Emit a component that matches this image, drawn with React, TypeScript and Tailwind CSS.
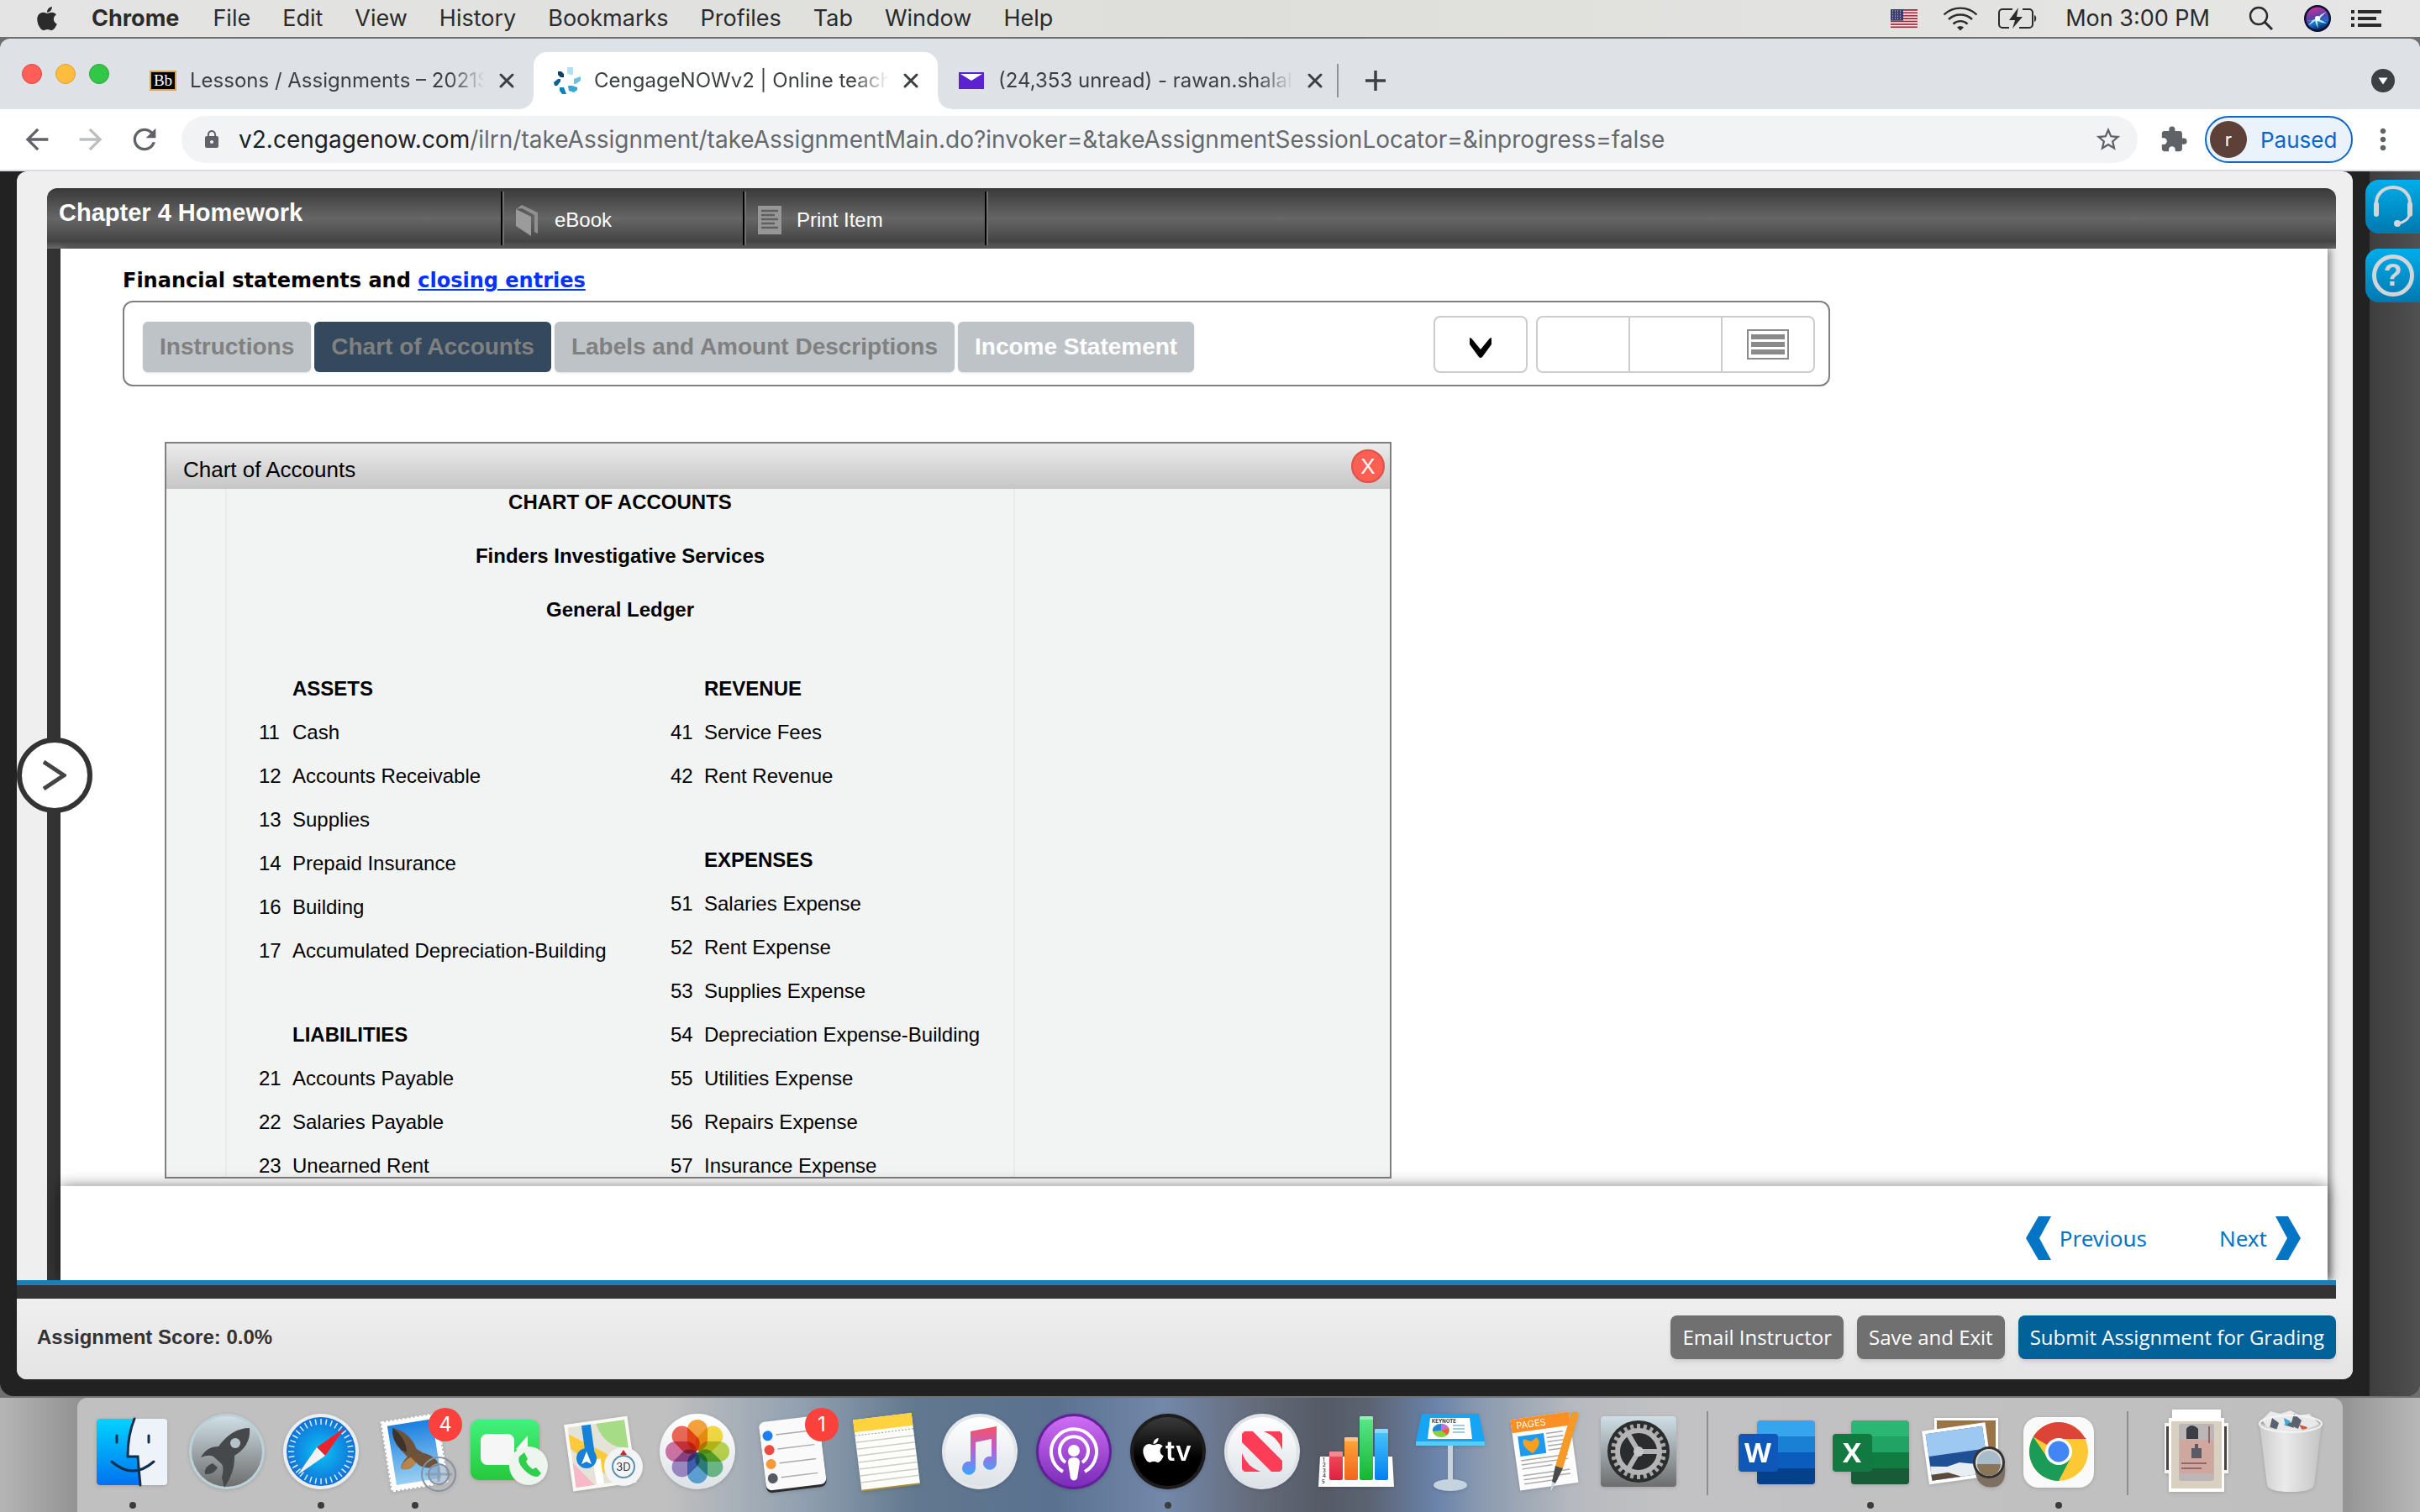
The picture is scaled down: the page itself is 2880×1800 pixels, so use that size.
import type { ReactNode } from "react";
import clsx from "clsx";
import { FaApple } from "react-icons/fa";
import {
  MdArrowBack,
  MdArrowForward,
  MdExtension,
  MdLock,
  MdMoreVert,
  MdRefresh,
  MdStarBorder,
} from "react-icons/md";

/* ============================================================
   MENU BAR
   ============================================================ */

const MENUS = ["File", "Edit", "View", "History", "Bookmarks", "Profiles", "Tab", "Window", "Help"];

function FlagIcon() {
  return (
    <svg viewBox="0 0 32 22" className="h-[22px] w-8">
      <rect width="32" height="22" fill="#fff" />
      {[0, 1, 2, 3, 4, 5, 6].map((i) => (
        <rect key={i} y={i * 3.4} width="32" height="1.8" fill="#b22234" />
      ))}
      <rect width="15" height="13.6" fill="#3c3b6e" />
      {[2, 5, 8, 11].map((y) =>
        [2, 5, 8, 11].map((x) => (
          <circle key={`${x}-${y}`} cx={x + 0.5} cy={y} r="0.6" fill="#fff" />
        )),
      )}
    </svg>
  );
}

function WifiIcon() {
  return (
    <svg viewBox="0 0 42 30" className="h-[30px] w-[42px]" fill="none" stroke="#2b2b2b" strokeWidth="2.4">
      <path d="M1.5 10.5a28 28 0 0 1 39 0" />
      <path d="M7 16a20.5 20.5 0 0 1 28 0" />
      <path d="M12.500 21.500a12.500 12.500 0 0 1 17 0" />
      <path d="M21 29.500l-4-4a6 6 0 0 1 8 0z" fill="#2b2b2b" stroke="none" />
    </svg>
  );
}

function BatteryIcon() {
  return (
    <svg viewBox="0 0 48 26" className="h-[26px] w-12" fill="none" stroke="#2b2b2b" strokeWidth="2">
      <path d="M17 2H5a4 4 0 0 0-4 4v14a4 4 0 0 0 4 4h8M29 2h8a4 4 0 0 1 4 4v14a4 4 0 0 1-4 4H25" />
      <path d="M43 9c3 1 3 7 0 8z" fill="#2b2b2b" stroke="none" />
      <path d="M24 0L13 15h7l-3 10 12-14h-7z" fill="#2b2b2b" stroke="none" />
    </svg>
  );
}

function SearchIcon() {
  return (
    <svg viewBox="0 0 30 30" className="size-[30px]" fill="none" stroke="#2b2b2b" strokeWidth="2.4">
      <circle cx="12" cy="12" r="10" />
      <path d="M19 19l9 9" strokeWidth="3" />
    </svg>
  );
}

function SiriIcon() {
  return (
    <svg viewBox="0 0 32 32" className="size-8">
      <defs>
        <linearGradient id="siri" x1="0.3" y1="0" x2="0.6" y2="1">
          <stop offset="0" stopColor="#d02f9a" />
          <stop offset="0.45" stopColor="#5b3fa8" />
          <stop offset="0.7" stopColor="#1c6fd0" />
          <stop offset="1" stopColor="#0a2050" />
        </linearGradient>
      </defs>
      <circle cx="16" cy="16" r="16" fill="#0c1030" />
      <circle cx="16" cy="16" r="13.500" fill="url(#siri)" />
      <path d="M3 19q8 0 13-4 5-5 11-7-6 5-9 9 5 2 9 5-7-1-11-3 0 5 1 9-3-5-4-9-5 4-8 5 3-3 5-6z" fill="#9ff0f5" />
      <circle cx="16" cy="16" r="3" fill="#fff" />
    </svg>
  );
}

function ListIcon() {
  return (
    <svg viewBox="0 0 36 20" className="h-5 w-9" fill="#2b2b2b">
      <path d="M0 0h4v4H0zM8 0h28v4H8zM0 8h4v4H0zM8 8h22v4H8zM0 16h4v4H0zM8 16h28v4H8z" />
    </svg>
  );
}

function MenuBar() {
  return (
    <header className="flex h-11 shrink-0 items-center bg-linear-to-r from-[#e4e4e4] via-[#dedfda] to-[#e6e6e6] pr-[46px] pl-10 text-[27px] text-[#2b2b2b]">
      <FaApple className="size-8" />
      <nav className="flex flex-1 gap-[38px] pl-[37px]">
        <span className="pr-0.5 font-bold">Chrome</span>
        {MENUS.map((menu) => (
          <span key={menu}>{menu}</span>
        ))}
      </nav>
      <div className="flex items-center">
        <FlagIcon />
        <span className="pl-[30px]"><WifiIcon /></span>
        <span className="pl-6"><BatteryIcon /></span>
        <span className="pl-8">Mon 3:00 PM</span>
        <span className="pl-[46px]"><SearchIcon /></span>
        <span className="pl-9"><SiriIcon /></span>
        <span className="pl-6"><ListIcon /></span>
      </div>
    </header>
  );
}

/* ============================================================
   BROWSER CHROME
   ============================================================ */

function BlackboardIcon() {
  return (
    <span className="flex h-6 w-8 items-center justify-center border-2 border-[#d5a550] bg-black font-['Liberation_Serif',serif] text-[19px] text-white">
      Bb
    </span>
  );
}

function CengageIcon() {
  return (
    <svg viewBox="0 0 32 32" className="size-8">
      <path d="M16 0h7v9h-4l-3-2z" fill="#b4dff0" />
      <path d="M24 14l8-3v5l-6 4h-2z" fill="#6fc0e2" />
      <path d="M17 22h5l6 2v3l-4 3-6-2z" fill="#3ba5d3" />
      <path d="M7 24h5l3 8h-5l-3-4z" fill="#0a84bd" />
      <path d="M0 18l5-4h3v3l-4 5H1z" fill="#0f5f90" />
      <path d="M5 5l4 0 3 3v4H8L5 9z" fill="#123f66" />
    </svg>
  );
}

function YahooMailIcon() {
  return (
    <svg viewBox="0 0 30 20" className="h-5 w-[30px]">
      <rect width="30" height="20" fill="#5b23cf" />
      <path d="M2 2h26L15 10z" fill="#fff" />
    </svg>
  );
}

function CloseIcon() {
  return (
    <svg viewBox="0 0 20 20" className="size-5" stroke="#3c4043" strokeWidth="3" strokeLinecap="round">
      <path d="M3 3l14 14M17 3L3 17" />
    </svg>
  );
}

interface TabProps {
  title: string;
  icon: ReactNode;
  active?: boolean;
}

function BrowserTab({ title, icon, active }: TabProps) {
  return (
    <div
      className={clsx(
        "relative flex h-[68px] w-[481px] items-center gap-4 pr-[22px] pl-6 text-[24px] text-[#3c4043]",
        active && "rounded-t-2xl bg-white",
      )}
    >
      <span className="flex w-8 shrink-0 justify-center">{icon}</span>
      <span className="min-w-0 flex-1 mask-r-from-88% whitespace-nowrap">{title}</span>
      <button type="button" aria-label="Close tab">
        <CloseIcon />
      </button>
      {active && (
        <>
          <span className="absolute bottom-0 -left-4 size-4 bg-[radial-gradient(circle_at_0_0,transparent_15px,white_16px)]" />
          <span className="absolute -right-4 bottom-0 size-4 bg-[radial-gradient(circle_at_100%_0,transparent_15px,white_16px)]" />
        </>
      )}
    </div>
  );
}

function TabStrip() {
  return (
    <div className="flex h-[84px] shrink-0 items-end rounded-t-xl bg-[#dee1e6]">
      <div className="flex w-[154px] gap-4 self-center pl-[26px]">
        <span className="size-6 rounded-full border border-[#e0483e] bg-[#ff5f57]" />
        <span className="size-6 rounded-full border border-[#e0a030] bg-[#ffbd3f]" />
        <span className="size-6 rounded-full border border-[#24a833] bg-[#33c748]" />
      </div>
      <BrowserTab title="Lessons / Assignments – 2021S" icon={<BlackboardIcon />} />
      <BrowserTab title="CengageNOWv2 | Online teach" icon={<CengageIcon />} active />
      <BrowserTab title="(24,353 unread) - rawan.shalal" icon={<YahooMailIcon />} />
      <div className="flex h-[68px] flex-1 items-center pr-[30px]">
        <span className="-ml-1.5 h-10 w-0.5 bg-[#909499]" />
        <button type="button" aria-label="New tab" className="ml-8">
          <svg viewBox="0 0 24 24" className="size-6" stroke="#3c4043" strokeWidth="3.500">
            <path d="M12 0v24M0 12h24" />
          </svg>
        </button>
        <button type="button" aria-label="Search tabs" className="ml-auto">
          <svg viewBox="0 0 28 28" className="size-7">
            <circle cx="14" cy="14" r="14" fill="#3c4043" />
            <path d="M8.500 10.500h11L14 18.500z" fill="#fff" />
          </svg>
        </button>
      </div>
    </div>
  );
}

function AddressBar() {
  return (
    <div className="flex h-[74px] shrink-0 items-center border-b-2 border-[#dadce0] bg-white pr-6 pl-6 text-[#5f6368]">
      <button type="button" aria-label="Back"><MdArrowBack className="size-10" /></button>
      <button type="button" aria-label="Forward" className="ml-6 text-[#bcbec1]"><MdArrowForward className="size-10" /></button>
      <button type="button" aria-label="Reload" className="ml-6"><MdRefresh className="size-10" /></button>
      <div className="ml-6 flex h-14 flex-1 items-center rounded-full bg-[#f1f3f4] pr-[18px] pl-6">
        <MdLock className="size-6" />
        <div className="flex-1 pl-5 text-[28px] whitespace-nowrap text-[#66696d]">
          <span className="text-[#202124]">v2.cengagenow.com</span>
          /ilrn/takeAssignment/takeAssignmentMain.do?invoker=&amp;takeAssignmentSessionLocator=&amp;inprogress=false
        </div>
        <button type="button" aria-label="Bookmark this tab"><MdStarBorder className="size-[34px]" /></button>
      </div>
      <button type="button" aria-label="Extensions" className="ml-[26px]"><MdExtension className="size-[34px]" /></button>
      <button
        type="button"
        className="ml-5 flex h-14 w-44 items-center gap-4 rounded-full border-2 border-[#0b66cc] bg-[#eaf2fb] pl-1 text-[26px] text-[#0b66cc]"
      >
        <span className="flex size-11 items-center justify-center rounded-full bg-[#5d4037] text-[22px] text-white">r</span>
        Paused
      </button>
      <button type="button" aria-label="Menu" className="ml-4"><MdMoreVert className="size-10" /></button>
    </div>
  );
}

/* ============================================================
   ASSIGNMENT PAGE
   ============================================================ */

function BookIcon() {
  return (
    <svg viewBox="0 0 28 38" className="h-[38px] w-7">
      <path d="M0 6L7 1l19 9v25l-4-2V13L7 5z" fill="#8f8f8f" />
      <path d="M0 6l18 9v23L0 26z" fill="#9b9b9b" />
    </svg>
  );
}

function PageIcon() {
  return (
    <svg viewBox="0 0 28 34" className="h-[34px] w-7">
      <rect width="28" height="34" fill="#979797" />
      <path d="M4 6h20M4 11h16M4 16h20M4 21h16M4 26h20" stroke="#5f5f5f" strokeWidth="2.400" />
    </svg>
  );
}

function HeaderItem({ icon, children }: { icon: ReactNode; children: ReactNode }) {
  return (
    <button
      type="button"
      className="flex h-16 w-72 items-center gap-[18px] border-l-2 border-black pt-1 pl-4 text-left text-[24px] text-white shadow-[inset_2px_0_0_#707070]"
    >
      {icon}
      {children}
    </button>
  );
}

function AssignmentHeader() {
  return (
    <div className="flex h-[72px] shrink-0 items-center rounded-t-xl bg-[linear-gradient(#393939,#666_50%,#444_88%,#6a6a6a)] font-['Liberation_Sans',sans-serif]">
      <h1 className="w-[540px] pb-3 pl-3.5 text-[29px] font-bold text-white">Chapter 4 Homework</h1>
      <HeaderItem icon={<BookIcon />}>eBook</HeaderItem>
      <HeaderItem icon={<PageIcon />}>Print Item</HeaderItem>
      <span className="h-16 w-1 border-r-2 border-l-2 border-r-[#707070] border-l-black" />
    </div>
  );
}

const TABS = [
  { label: "Instructions", style: "bg-[#bdc3c7] text-[#808080] shadow" },
  { label: "Chart of Accounts", style: "bg-[#34495e] text-[#808080]" },
  { label: "Labels and Amount Descriptions", style: "bg-[#bdc3c7] text-[#808080] shadow" },
  { label: "Income Statement", style: "bg-[#bdc3c7] text-white shadow" },
];

function WorksheetToolbar() {
  return (
    <div className="mt-2 flex h-[102px] w-full max-w-[2032px] shrink-0 items-center justify-between rounded-xl border-2 border-[#808080] pr-4 pl-[22px]">
      <div className="flex gap-1 pt-2">
        {TABS.map((tab) => (
          <button
            key={tab.label}
            type="button"
            className={clsx("h-[60px] rounded-md px-5 text-[28px] font-bold", tab.style)}
          >
            {tab.label}
          </button>
        ))}
      </div>
      <div className="flex gap-2.5 pt-0.5">
        <button
          type="button"
          aria-label="Expand"
          className="flex h-[68px] w-28 items-center justify-center rounded-lg border-2 border-[#ccc]"
        >
          <svg viewBox="0 0 26 24" className="mt-2 h-6 w-[26px]">
            <path d="M0 0q2 0 4 3l9 11 9-11q2-3 4-3v8L15 23q-2 2-4 0L0 8z" />
          </svg>
        </button>
        <div className="flex h-[68px] divide-x-2 divide-[#ccc] rounded-lg border-2 border-[#ccc]">
          <button type="button" aria-label="Undo" className="w-[110px]" />
          <button type="button" aria-label="Redo" className="w-[110px]" />
          <button type="button" aria-label="List view" className="flex w-[108px] items-center justify-center">
            <svg viewBox="0 0 50 36" className="h-9 w-[50px]">
              <rect x="1" y="1" width="48" height="34" fill="#fff" stroke="#8a8a8a" strokeWidth="2" />
              <path d="M5 9h40M5 18h40M5 27h40" stroke="#8a8a8a" strokeWidth="6" />
            </svg>
          </button>
        </div>
      </div>
    </div>
  );
}

interface Section {
  title: string;
  accounts: [number, string][];
}

const LEFT_SECTIONS: Section[] = [
  {
    title: "ASSETS",
    accounts: [
      [11, "Cash"],
      [12, "Accounts Receivable"],
      [13, "Supplies"],
      [14, "Prepaid Insurance"],
      [16, "Building"],
      [17, "Accumulated Depreciation-Building"],
    ],
  },
  {
    title: "LIABILITIES",
    accounts: [
      [21, "Accounts Payable"],
      [22, "Salaries Payable"],
      [23, "Unearned Rent"],
    ],
  },
];

const RIGHT_SECTIONS: Section[] = [
  {
    title: "REVENUE",
    accounts: [
      [41, "Service Fees"],
      [42, "Rent Revenue"],
    ],
  },
  {
    title: "EXPENSES",
    accounts: [
      [51, "Salaries Expense"],
      [52, "Rent Expense"],
      [53, "Supplies Expense"],
      [54, "Depreciation Expense-Building"],
      [55, "Utilities Expense"],
      [56, "Repairs Expense"],
      [57, "Insurance Expense"],
    ],
  },
];

function LedgerColumn({ sections }: { sections: Section[] }) {
  return (
    <div className="flex flex-col gap-12">
      {sections.map((section) => (
        <table key={section.title} className="w-full">
          <thead>
            <tr className="h-[52px]">
              <td className="w-10" />
              <th className="p-0 text-left">{section.title}</th>
            </tr>
          </thead>
          <tbody>
            {section.accounts.map(([code, name]) => (
              <tr key={code} className="h-[52px]">
                <td className="w-10 p-0">{code}</td>
                <td className="p-0 whitespace-nowrap">{name}</td>
              </tr>
            ))}
          </tbody>
        </table>
      ))}
    </div>
  );
}

function ChartOfAccounts() {
  return (
    <section className="mt-[66px] ml-[50px] flex min-h-0 w-full max-w-[1460px] flex-1 flex-col border-2 border-[#808080] bg-[#f2f4f4]">
      <div className="flex h-[54px] shrink-0 items-center justify-between bg-linear-to-b from-[#ececec] to-[#c6c6c6] pr-1.5 pl-5">
        <h3 className="pt-2 text-[26px]">Chart of Accounts</h3>
        <button
          type="button"
          aria-label="Close"
          className="flex size-10 items-center justify-center rounded-full border-2 border-[#d9534a] bg-[#ff5f52] text-[26px] text-white"
        >
          X
        </button>
      </div>
      <div className="ml-[70px] min-h-0 w-[940px] flex-1 overflow-hidden border-x-2 border-[#eaebeb] text-[24px]">
        <div className="flex flex-col gap-8 text-center leading-8 font-bold">
          <p>CHART OF ACCOUNTS</p>
          <p>Finders Investigative Services</p>
          <p>General Ledger</p>
        </div>
        <div className="mt-[52px] grid grid-cols-[490px_1fr] pl-[38px]">
          <LedgerColumn sections={LEFT_SECTIONS} />
          <LedgerColumn sections={RIGHT_SECTIONS} />
        </div>
      </div>
    </section>
  );
}

function PagerNav() {
  return (
    <nav className="relative flex h-28 shrink-0 items-center justify-end gap-[86px] bg-white pr-8 font-['Noto_Sans',sans-serif] text-[26px] text-[#0474c4] shadow-[0_0_16px_rgba(0,0,0,0.5)]">
      <a href="#previous" className="flex items-center gap-2.5 pt-3">
        <svg viewBox="0 0 30 52" className="h-[52px] w-[30px]" fill="#0474c4">
          <path d="M15 0h15L16 26l14 26H15L0 26z" />
        </svg>
        Previous
      </a>
      <a href="#next" className="flex items-center gap-2.5 pt-3">
        Next
        <svg viewBox="0 0 30 52" className="h-[52px] w-[30px]" fill="#0474c4">
          <path d="M15 0H0l14 26L0 52h15l15-26z" />
        </svg>
      </a>
    </nav>
  );
}

function AssignmentFooter() {
  return (
    <footer className="flex h-24 shrink-0 items-center gap-4 rounded-b-xl bg-linear-to-b from-[#efefef] to-[#e4e4e4] pr-5 pb-1 pl-6 font-['Open_Sans',sans-serif] text-[24px] text-white">
      <p className="flex-1 font-['Liberation_Sans',sans-serif] font-bold text-[#333]">Assignment Score: 0.0%</p>
      <button type="button" className="h-[52px] rounded-lg bg-[#707070] px-3.5 shadow-md">Email Instructor</button>
      <button type="button" className="h-[52px] rounded-lg bg-[#707070] px-3.5 shadow-md">Save and Exit</button>
      <button type="button" className="h-[52px] rounded-lg bg-[#006298] px-3.5 shadow-md">
        Submit Assignment for Grading
      </button>
    </footer>
  );
}

function SideStrip() {
  return (
    <aside className="flex w-20 shrink-0 flex-col items-end gap-[18px] bg-[linear-gradient(90deg,#222_20px,#3e3e3e_20px,#505050)] pt-2.5">
      <button
        type="button"
        aria-label="Support"
        className="flex h-16 w-[65px] items-center justify-center rounded-l-2xl bg-linear-to-b from-[#00aeea] to-[#0078b0]"
      >
        <svg viewBox="0 0 48 50" className="h-[50px] w-12" fill="none" stroke="#d2d6d8" strokeWidth="4">
          <path d="M4 26C0-6 48-6 44 26" />
          <path d="M4 22v12M44 22v12" strokeWidth="6" strokeLinecap="round" />
          <path d="M43 36q-2 6-12 9" strokeWidth="3" />
          <circle cx="29" cy="45" r="4" fill="#d2d6d8" stroke="none" />
        </svg>
      </button>
      <button
        type="button"
        aria-label="Help"
        className="flex h-16 w-[65px] items-center justify-center rounded-l-2xl bg-linear-to-b from-[#00aeea] to-[#0078b0]"
      >
        <span className="flex size-[50px] items-center justify-center rounded-full border-5 border-[#d2d6d8] font-['Liberation_Sans',sans-serif] text-[36px] font-bold text-[#d2d6d8]">
          ?
        </span>
      </button>
    </aside>
  );
}

function AssignmentPage() {
  return (
    <div className="flex min-h-0 flex-1 overflow-hidden rounded-b-2xl bg-[#222] pl-5">
      <main className="relative mb-5 flex min-w-0 flex-1 flex-col rounded-xl bg-[#efefef] pt-5">
        <div className="flex min-h-0 flex-1 flex-col pr-5 pl-9">
          <AssignmentHeader />
          <div className="flex min-h-0 flex-1 border-l-16 border-[#333] pr-2.5">
            <div className="flex min-w-0 flex-1 flex-col bg-white shadow-[4px_0_8px_rgba(0,0,0,0.4)]">
              <div className="flex min-h-0 flex-1 flex-col overflow-hidden pt-[22px] pb-[9px] pl-[74px] font-['Liberation_Sans',sans-serif] text-black">
                <h2 className="font-['DejaVu_Sans',sans-serif] text-[24px] leading-8 font-bold">
                  Financial statements and{" "}
                  <a href="#closing-entries" className="text-[#0433ff] underline">closing entries</a>
                </h2>
                <WorksheetToolbar />
                <ChartOfAccounts />
              </div>
              <PagerNav />
            </div>
          </div>
        </div>
        <div className="relative mr-5 h-[22px] shrink-0 border-t-6 border-[#1a7fb5] bg-[#333]" />
        <AssignmentFooter />
        <button
          type="button"
          aria-label="Open navigation"
          className="absolute top-1/2 left-0 flex size-[90px] -translate-y-1/2 items-center justify-center rounded-full border-6 border-[#333] bg-white"
        >
          <svg viewBox="0 0 28 36" className="h-9 w-7" fill="none" stroke="#444" strokeWidth="5">
            <path d="M1 2l24 16L1 34" />
          </svg>
        </button>
      </main>
      <SideStrip />
    </div>
  );
}

/* ============================================================
   DOCK
   Each icon is drawn around the origin of a 96-unit square.
   ============================================================ */

interface DockItemProps {
  label: string;
  running?: boolean;
  badge?: string;
  children: ReactNode;
}

function DockItem({ label, running, badge, children }: DockItemProps) {
  return (
    <button type="button" aria-label={label} className="relative flex h-full w-28 flex-col items-center pt-4">
      <svg viewBox="-48 -48 96 96" className="size-24 overflow-visible drop-shadow-sm">
        {children}
      </svg>
      {running && <span className="mt-3 size-2 rounded-full bg-[#3c3c3c]" />}
      {badge && (
        <span className="absolute top-3 right-0 flex size-10 items-center justify-center rounded-full bg-[#fb413b] text-[24px] text-white">
          {badge}
        </span>
      )}
    </button>
  );
}

function DockDivider() {
  return (
    <div className="flex w-13 justify-center pt-4">
      <span className="h-25 w-0.5 bg-[#8e8e8e]" />
    </div>
  );
}

const PETALS = ["#f7941d", "#f5d722", "#b8d433", "#5cba7d", "#4ba0dc", "#9a7fc4", "#d2619b", "#f0503c"];
const TICKS = Array.from({ length: 36 }, (_, i) => i * 10);
const TEETH = Array.from({ length: 24 }, (_, i) => i * 15);

function DockGradients() {
  return (
    <svg className="absolute size-0" aria-hidden="true">
      <defs>
        <linearGradient id="finder" x2="0" y2="1">
          <stop stopColor="#00d4ff" />
          <stop offset="1" stopColor="#0072f0" />
        </linearGradient>
        <linearGradient id="steel" x2="0" y2="1">
          <stop stopColor="#cfdfe6" />
          <stop offset="1" stopColor="#6d6d6d" />
        </linearGradient>
        <radialGradient id="safari">
          <stop stopColor="#0ac4f5" />
          <stop offset="1" stopColor="#116fd8" />
        </radialGradient>
        <linearGradient id="sky" x2="0" y2="1">
          <stop stopColor="#1c7fe0" />
          <stop offset="1" stopColor="#9ad0f2" />
        </linearGradient>
        <linearGradient id="green" x2="0" y2="1">
          <stop stopColor="#42f27c" />
          <stop offset="1" stopColor="#25c93c" />
        </linearGradient>
        <linearGradient id="white" x2="0" y2="1">
          <stop stopColor="#ffffff" />
          <stop offset="1" stopColor="#dde2e7" />
        </linearGradient>
        <linearGradient id="note" x2="0" y2="1">
          <stop stopColor="#fb4f63" />
          <stop offset="0.5" stopColor="#b164d8" />
          <stop offset="1" stopColor="#36a7ff" />
        </linearGradient>
        <linearGradient id="podcast" x2="0" y2="1">
          <stop stopColor="#cf6df5" />
          <stop offset="1" stopColor="#7a2cb8" />
        </linearGradient>
        <linearGradient id="black" x2="0" y2="1">
          <stop stopColor="#3a3a3a" />
          <stop offset="0.6" stopColor="#000" />
        </linearGradient>
        <linearGradient id="bar-red" x2="0" y2="1">
          <stop stopColor="#f0505c" />
          <stop offset="1" stopColor="#e01f3f" />
        </linearGradient>
        <linearGradient id="bar-orange" x2="0" y2="1">
          <stop stopColor="#ffa83c" />
          <stop offset="1" stopColor="#f2641a" />
        </linearGradient>
        <linearGradient id="bar-green" x2="0" y2="1">
          <stop stopColor="#5ce88a" />
          <stop offset="1" stopColor="#17b52e" />
        </linearGradient>
        <linearGradient id="bar-blue" x2="0" y2="1">
          <stop stopColor="#4cc8fb" />
          <stop offset="1" stopColor="#0080f2" />
        </linearGradient>
        <linearGradient id="trash" x2="1" y2="0">
          <stop stopColor="#cfcfcf" />
          <stop offset="0.4" stopColor="#f1f1f1" />
          <stop offset="1" stopColor="#c6c6c6" />
        </linearGradient>
      </defs>
    </svg>
  );
}

function OfficeIcon({ letter, shades }: { letter: string; shades: string[] }) {
  return (
    <>
      <rect x="-23" y="-37" width="69" height="76" rx="4" fill={shades[0]} />
      <rect x="-23" y="-18" width="69" height="20" fill={shades[1]} />
      <rect x="-23" y="1" width="69" height="20" fill={shades[2]} />
      <path d="M-23 20h69v15a4 4 0 0 1-4 4h-61a4 4 0 0 1-4-4z" fill={shades[3]} />
      <rect x="-45" y="-21" width="47" height="45" rx="4" fill={shades[4]} />
      <text x="-22" y="13" textAnchor="middle" fontSize="33" fontWeight="700" fill="#fff" fontFamily="Open Sans">
        {letter}
      </text>
    </>
  );
}

function Dock() {
  return (
    <footer className="flex h-[136px] shrink-0 justify-center bg-[linear-gradient(90deg,#b5b5b5,#8a8a8a_4%,#8a8a8a_96%,#b8b8b8)]">
      <DockGradients />
      <div className="flex rounded-t-xl bg-[linear-gradient(90deg,#c0c0c0,#c0c0c0_26%,#91a0b0_32%,#62788f_37%,#5a7190_43%,#7488aa_48%,#646b7a_52%,#555a66_55%,#5b6372_57%,#6b84ab_60%,#8b9ab0_62%,#b6b9bf_66%,#c2c2c4_70%,#bfbfbf)] pr-1.5 pl-2.5">
        <DockItem label="Finder" running>
          <rect x="-43" y="-39" width="84" height="79" rx="4" fill="#eef3fa" />
          <path d="M2-39h-41a4 4 0 0 0-4 4v71a4 4 0 0 0 4 4H9Q7 20 6 6h-12Q-6-20 2-39z" fill="url(#finder)" />
          <path d="M-19-19v8M19-19v8M-25 12Q0 34 25 12M2-39Q-6-20-6 6H6Q7 20 9 40" fill="none" stroke="#12304d" strokeWidth="3" strokeLinecap="round" />
        </DockItem>
        <DockItem label="Launchpad">
          <circle r="45" fill="#bcd0d9" />
          <circle r="42" fill="url(#steel)" />
          <path d="M27-28Q6-28-10-6-24-6-31 7q10-4 15-1l10 9q3 5 0 16l3 12Q10 24 9 5 29-7 27-28z" fill="#46494c" />
          <circle cx="10" cy="-10" r="6" fill="#b6c4ca" />
          <path d="M-17 14q-11 4-9 13 10 1 15-8z" fill="#46494c" />
        </DockItem>
        <DockItem label="Safari" running>
          <circle r="45" fill="#eceff1" />
          <circle r="41" fill="url(#safari)" />
          {TICKS.map((a) => (
            <path key={a} d="M0-39v7" stroke="#d7f1ff" strokeWidth="1.500" transform={`rotate(${a})`} />
          ))}
          <path d="M28-28L5 5-5-5z" fill="#f0202c" />
          <path d="M-28 28L5 5-5-5z" fill="#f2f2f2" />
        </DockItem>
        <DockItem label="Mail" running badge="4">
          <g transform="rotate(-9)">
            <rect x="-34" y="-40" width="66" height="82" fill="#fff" stroke="#fff" strokeWidth="3" strokeDasharray="3 2" />
            <rect x="-28" y="-35" width="54" height="71" fill="url(#sky)" />
            <path d="M-22-32q-4 14 6 28l6 9q-7 4-10 12 10 6 19-4 8 12 26 8 0-11-16-18l-7-6q-4-20-24-29z" fill="#6e533a" />
            <path d="M-22-32q-4 14 6 28l6 3q2-16-12-31z" fill="#3c332c" />
            <path d="M-20 17q10 6 19-4l-5-7q-9 2-14 11z" fill="#b5854c" />
          </g>
          <g fill="none" stroke="#8590a0" strokeWidth="2">
            <circle cx="28" cy="27" r="20" />
            <circle cx="28" cy="27" r="12" fill="#8aa9c8" fillOpacity="0.600" />
            <path d="M12 27h32M28 18v18" strokeWidth="3" strokeOpacity="0.600" />
          </g>
        </DockItem>
        <DockItem label="FaceTime">
          <rect x="-46" y="-38" width="82" height="72" rx="10" fill="url(#green)" />
          <rect x="-34" y="-21" width="40" height="37" rx="8" fill="#f6f6f6" />
          <path d="M8-3L22-19V12z" fill="#f6f6f6" />
          <circle cx="23" cy="17" r="23" fill="#eef4ee" />
          <path d="M12 6q-3 6 5 15t17 9l4-4-6-7-4 2q-5-3-8-9l2-3-4-8z" fill="#2fcf4c" />
        </DockItem>
        <DockItem label="Maps">
          <g transform="rotate(-8)">
            <rect x="-42" y="-38" width="76" height="80" fill="#fafaf5" />
            <rect x="-38" y="-34" width="68" height="72" fill="#e5e2d8" />
            <path d="M-4-34h34v34Q2-4-4-34z" fill="#a5dc85" />
            <path d="M-38-8L10 38h20V22L-38-26z" fill="#ffc93c" />
            <path d="M-38 8v30h22z" fill="#f9b8c8" />
            <path d="M-16-34v40" stroke="#1582d8" strokeWidth="11" />
            <path d="M-9 38V8" stroke="#fff" strokeWidth="9" />
          </g>
          <circle cx="-20" cy="8" r="12" fill="#1582d8" />
          <path d="M-20 0l6 15-6-3-6 3z" fill="#fff" />
          <circle cx="24" cy="18" r="23" fill="#f2f4f6" />
          <circle cx="24" cy="18" r="13" fill="none" stroke="#5d8fae" strokeWidth="2" />
          <path d="M24-2l4 6h-8z" fill="#e02020" />
          <text x="24" y="23" textAnchor="middle" fontSize="13" fill="#333">3D</text>
        </DockItem>
        <DockItem label="Photos">
          <circle r="45" fill="url(#white)" />
          {PETALS.map((color, i) => (
            <rect
              key={color}
              x="-12"
              y="-38"
              width="24"
              height="37"
              rx="12"
              fill={color}
              fillOpacity="0.850"
              className="mix-blend-multiply"
              transform={`rotate(${i * 45})`}
            />
          ))}
        </DockItem>
        <DockItem label="Reminders" badge="1">
          <g transform="rotate(-7)">
            <rect x="-35" y="-36" width="72" height="82" rx="7" fill="#2c2c2e" />
            <rect x="-35" y="-39" width="72" height="82" rx="7" fill="#fafafa" />
            <path d="M-16-22h44M-16-5h44M-16 12h44M-16 29h44" stroke="#aaa" strokeWidth="1.500" />
            <circle cx="-26" cy="-22" r="6" fill="#1c7ff2" />
            <circle cx="-26" cy="-5" r="6" fill="#ef4a3f" />
            <circle cx="-26" cy="12" r="6" fill="#f5993a" />
            <circle cx="-26" cy="29" r="6" fill="#565b62" />
          </g>
        </DockItem>
        <DockItem label="Notes">
          <g transform="rotate(-7)">
            <rect x="-34" y="-42" width="70" height="85" fill="#fdfdfa" />
            <rect x="-34" y="-42" width="70" height="15" fill="#ffd23f" />
            <path d="M-34-23h70" stroke="#999" strokeDasharray="2 2" />
            <path d="M-34-15h70M-34-7h70M-34 1h70M-34 9h70M-34 17h70M-34 25h70M-34 33h70" stroke="#ccc" strokeWidth="1.500" />
            <path d="M-34 43h70" stroke="#a68b3c" strokeWidth="2" />
          </g>
        </DockItem>
        <DockItem label="Music">
          <circle r="45" fill="#e3e6ea" />
          <circle r="41" fill="url(#white)" />
          <path d="M-11-24L20-30V14a8 8 0 1 1-6-8v-21l-19 4V20a8 8 0 1 1-6-8z" fill="url(#note)" />
        </DockItem>
        <DockItem label="Podcasts">
          <circle r="45" fill="#64209a" />
          <circle r="42" fill="url(#podcast)" />
          <g fill="none" stroke="#fff" strokeWidth="4">
            <path d="M-13 24a27 27 0 1 1 26 0" />
            <path d="M-10 13a17 17 0 1 1 20 0" />
          </g>
          <circle cy="-1" r="7" fill="#fff" />
          <path d="M-7 13q0-6 7-6t7 6l-3 19q-4 5-8 0z" fill="#fff" />
        </DockItem>
        <DockItem label="TV" running>
          <circle r="45" fill="#1d1d1d" />
          <circle r="41" fill="url(#black)" />
          <FaApple x="-34" y="-18" size={33} color="#fff" />
          <text x="-3" y="11" fontSize="32" fontWeight="600" fill="#fff" fontFamily="Inter">tv</text>
        </DockItem>
        <DockItem label="News">
          <circle r="45" fill="#dfe2e6" />
          <circle r="41" fill="url(#white)" />
          <path
            d="M-21-24h10L24 11v10l-3 3H11L-24-11v-10zM2-24h19l3 3v19Q18-18 2-24zM-24 2q6 16 22 22h-19l-3-3z"
            fill="#fd3c58"
          />
        </DockItem>
        <DockItem label="Numbers">
          <path d="M-43 6h86l2 36h-90z" fill="#fdfdfd" />
          <g fill="#555" fontSize="6" fontWeight="700">
            <text x="-40" y="12">1</text>
            <text x="-40" y="18">2</text>
            <text x="-40" y="25">3</text>
            <text x="-40" y="31">4</text>
            <text x="-41" y="38">5</text>
          </g>
          <rect x="-32" y="0" width="16" height="34" rx="2" fill="url(#bar-red)" />
          <rect x="-14" y="-17" width="16" height="51" rx="2" fill="url(#bar-orange)" />
          <rect x="4" y="-42" width="16" height="76" rx="2" fill="url(#bar-green)" />
          <rect x="22" y="-27" width="16" height="61" rx="2" fill="url(#bar-blue)" />
          <path d="M-32 0h16v6h-16zM-14-17h16v5h-16zM4-42h16v4H4zM22-27h16v5H22z" fill="#fff" fillOpacity="0.350" />
        </DockItem>
        <DockItem label="Keynote">
          <ellipse cy="40" rx="20" ry="7" fill="#c3d3e0" />
          <rect x="-3" y="-8" width="6" height="48" fill="#c9d2da" />
          <path d="M-34-45h68l7 33v5h-82v-5z" fill="#16a5f5" />
          <path d="M-41-12h82v5h-82z" fill="#59cbfa" />
          <path d="M-24-40h47l3 25h-53z" fill="#fff" />
          <text x="-22" y="-34" fontSize="6" fontWeight="700" fill="#333">KEYNOTE</text>
          <ellipse cx="-11" cy="-25" rx="10" ry="8" fill="#8bd13f" />
          <path d="M-11-25v-8a10 8 0 0 0-10 9z" fill="#1c86e0" />
          <path d="M-11-25v-8a10 8 0 0 1 9 5z" fill="#c86be0" />
          <path d="M-11-25l9-3a9 8 0 0 1-2 8z" fill="#f25a3c" />
          <path d="M3-31h14M3-27h14M3-23h14" stroke="#8bc" strokeWidth="1.500" />
        </DockItem>
        <DockItem label="Pages">
          <g transform="rotate(-8)">
            <rect x="-35" y="-43" width="70" height="85" fill="#fdfdfd" />
            <rect x="-35" y="-43" width="70" height="16" fill="#fb8f23" />
            <text x="-29" y="-31" fontSize="11" fill="#fff">PAGES</text>
            <rect x="-29" y="-22" width="31" height="24" fill="#1c9af0" />
            <path d="M-14 0q-14-11-8-18l8 4 7-4q7 8-7 18z" fill="#f9a01e" />
            <path d="M5-21h20M5-16h20M5-11h20M5-6h20M5-1h20M-29 7h56M-29 12h56M-29 17h36M-29 25h56M-29 30h56M-29 35h40" stroke="#aaa" strokeWidth="1.500" />
          </g>
          <path d="M32-46q4-3 9 1L22 20l-9-3z" fill="#f59a28" />
          <path d="M13 17l9 3-9 18-4-2z" fill="#4b4b4b" />
          <path d="M9 36l4 2-6 10z" fill="#c9d6de" />
        </DockItem>
        <DockItem label="System Preferences">
          <rect x="-45" y="-42" width="90" height="84" rx="4" fill="url(#steel)" />
          <circle r="37" fill="#2b2c2e" />
          {TEETH.map((a) => (
            <rect key={a} x="-2" y="-33" width="4" height="7" fill="#a8a8a8" transform={`rotate(${a})`} />
          ))}
          <circle r="25" fill="none" stroke="#b4b4b4" strokeWidth="6" />
          <path d="M0 0h25M0 0l-13-22M0 0l-13 22" stroke="#b4b4b4" strokeWidth="6" />
          <circle r="6" fill="#c6c6c6" />
        </DockItem>
        <DockDivider />
        <DockItem label="Word">
          <OfficeIcon letter="W" shades={["#36a5ee", "#1a80d4", "#0a5dbd", "#04408c", "#0f57b8"]} />
        </DockItem>
        <DockItem label="Excel" running>
          <OfficeIcon letter="X" shades={["#2bb673", "#21a366", "#107c41", "#185c37", "#127a41"]} />
        </DockItem>
        <DockItem label="Preview">
          <rect x="-36" y="-40" width="76" height="70" fill="#fff" />
          <rect x="-33" y="-37" width="70" height="64" fill="#9a7444" />
          <g transform="rotate(-8)">
            <rect x="-47" y="-31" width="76" height="64" fill="#fff" />
            <rect x="-43" y="-27" width="68" height="56" fill="#1f4f94" />
            <rect x="-43" y="-27" width="68" height="27" fill="#9cc8f2" />
            <path d="M-43 12l20 3 15-3 33 8v9h-68z" fill="#e8eef2" />
            <path d="M-43 22l20 0 15 7h-35z" fill="#5a4a3c" />
          </g>
          <path d="M12 14l36 2q2 20-8 25-12 4-20-2-8-6-8-25z" fill="#7d7062" />
          <circle cx="29" cy="13" r="19" fill="#333" />
          <circle cx="29" cy="13" r="15" fill="#a9bccb" stroke="#ddd" strokeWidth="2" />
          <path d="M15 15h28a14 14 0 0 1-28 0z" fill="#8a7558" />
        </DockItem>
        <DockItem label="Chrome" running>
          <rect x="-42" y="-41" width="84" height="84" rx="18" fill="#fafafa" />
          <circle r="35" fill="#fcc934" />
          <path d="M0 0L-30.300-17.500A35 35 0 0 1 30.300-17.500L33-15H0z" fill="#dc4437" />
          <path d="M-30.300-17.500A35 35 0 0 0 0 35L14 8-13 8z" fill="#1a9c58" />
          <circle r="16" fill="#fff" />
          <circle r="12.500" fill="#4285f4" />
        </DockItem>
        <DockDivider />
        <DockItem label="Documents">
          <rect x="-29" y="-50" width="58" height="40" fill="#fff" />
          <rect x="-38" y="-34" width="76" height="60" fill="#f4f4f4" />
          <rect x="-36" y="-30" width="72" height="52" fill="#4a443c" />
          <rect x="-33" y="-40" width="66" height="88" fill="#fff" />
          <rect x="-30" y="-36" width="60" height="80" fill="#d9d0c2" />
          <rect x="-21" y="-33" width="42" height="68" rx="3" fill="#bdb6b6" />
          <rect x="-20" y="-14" width="40" height="40" fill="#cfa79e" />
          <path d="M-12-15v-12q6-8 14 0v12z" fill="#3b3f45" />
          <path d="M-6-4h4v-5h4v5h4v12H-6z" fill="#5a5b66" />
          <path d="M-18 14h30M-18 20h24M15-30v20" stroke="#8f6a68" strokeWidth="2" />
        </DockItem>
        <DockItem label="Trash">
          <path d="M-34-38l10-10 12 3 12-4 10 6 12-2 12 12-10 8h-50z" fill="#e9e9e9" />
          <path d="M-22-40l8 6-3 9-8-3zM4-45l9 8-4 10-9-4zM-8-32l8-3 4 7z" fill="#5a6470" />
          <path d="M-8-40l8 4-6 6z" fill="#3fa8d8" />
          <path d="M10-32l10 3-4 7z" fill="#d0563f" />
          <path d="M-37-34q37 18 74 0L28 40q-3 8-28 8t-28-8z" fill="url(#trash)" fillOpacity="0.900" />
          <ellipse cy="-33" rx="37" ry="10" fill="none" stroke="#f4f4f4" strokeWidth="2" />
        </DockItem>
      </div>
    </footer>
  );
}

export default function App() {
  return (
    <div className="flex h-screen flex-col overflow-hidden bg-[#6f6f6f] font-['Inter',sans-serif]">
      <MenuBar />
      <div className="my-0.5 flex min-h-0 flex-1 flex-col">
        <TabStrip />
        <AddressBar />
        <AssignmentPage />
      </div>
      <Dock />
    </div>
  );
}
